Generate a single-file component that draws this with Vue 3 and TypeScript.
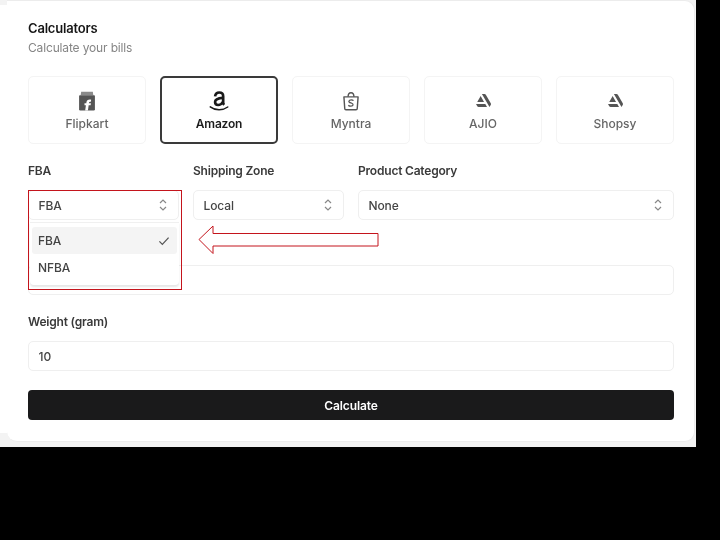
<template>
  <div class="screen">
    <div class="edge"></div>
    <div class="card">
      <h1 class="title">Calculators</h1>
      <p class="subtitle">Calculate your bills</p>

      <div class="tabs">
        <button v-for="tab in tabs" :key="tab.name" class="tab" :class="{ active: tab.name === selected }">
          <svg v-if="tab.icon === 'flipkart'" class="tab-icon" viewBox="0 0 24 24">
            <path d="M5 1h14l.6 4H4.400z" fill="#8a8a8a" />
            <path d="M3.500 5h17a1 1 0 0 1 1 1v16a1.500 1.500 0 0 1-1.500 1.500H4A1.500 1.500 0 0 1 2.500 22V6a1 1 0 0 1 1-1z" fill="#555" />
            <path d="M17 10.500c-3.300-.6-5.300.4-5.700 3.200l-.2 1H9v2.500h1.700l-.9 6.300h3.300l.9-6.300h2.300l.4-2.500h-2.400l.1-.7c.1-1 .9-1.300 2.200-1z" fill="#fff" />
          </svg>
          <svg v-else-if="tab.icon === 'amazon'" class="tab-icon" viewBox="0 0 24 24">
            <path d="M7.300 6.500C7.800 3 10 1.800 12.200 1.800c2.800 0 4.800 1.300 4.800 4.400v8c0 1 .5 1.700 1.200 2.400" fill="none" stroke="#1a1a1a" stroke-width="3.200" />
            <path d="M16.800 8.200c-4.800.3-9.500 1-9.500 5.100 0 2.300 1.500 3.500 3.600 3.500 2.500 0 4.500-1.500 5.900-3.800" fill="none" stroke="#1a1a1a" stroke-width="3.200" />
            <path d="M1.500 19c6 4.600 15 4.600 21 .2" fill="none" stroke="#1a1a1a" stroke-width="1.800" stroke-linecap="round" />
          </svg>
          <svg v-else-if="tab.icon === 'myntra'" class="tab-icon" viewBox="0 0 24 24">
            <path d="M3.500 7h17l-1 14a1.500 1.500 0 0 1-1.500 1.500H6A1.500 1.500 0 0 1 4.500 21z" fill="none" stroke="#555" stroke-width="1.700" stroke-linejoin="round" />
            <path d="M8.500 7c0-3 1.500-5 3.500-5s3.500 2 3.500 5" fill="none" stroke="#555" stroke-width="1.700" />
            <path d="M15 11.500c-.8-1-4.800-1.500-5.500.6-.8 2.700 5.500 1.800 5 4.600-.4 2-4.500 1.900-5.700.4" fill="none" stroke="#555" stroke-width="1.500" />
          </svg>
          <span v-else class="tab-icon">
            <svg class="triangle" viewBox="0 0 24 24">
              <path fill="#555" d="M0 17.723l2.027 3.505h.001a2.424 2.424 0 0 0 2.164 1.333h13.457l-2.792-4.838H0zm24 .025c0-.484-.143-.935-.388-1.314L15.728 2.728a2.424 2.424 0 0 0-2.142-1.289H9.419L21.598 22.54l1.920-3.325c.378-.637.482-.919.482-1.467zm-11.129-3.462L7.428 4.858l-5.444 9.428h10.887z" />
            </svg>
          </span>
          <span>{{ tab.name }}</span>
        </button>
      </div>

      <div class="selects">
        <div v-for="field in selects" :key="field.label" class="field">
          <label class="label">{{ field.label }}</label>
          <div class="control select">
            <span>{{ field.value }}</span>
            <svg class="chevrons" viewBox="0 0 12 14">
              <path d="M3 5l3-3 3 3M3 9l3 3 3-3" />
            </svg>
          </div>
          <div v-if="field.label === 'FBA'" class="dropdown">
            <div v-for="opt in fbaOptions" :key="opt" class="option" :class="{ current: opt === field.value }">
              <span>{{ opt }}</span>
              <svg v-if="opt === field.value" class="check" viewBox="0 0 14 12">
                <path d="M1.500 6.500l3.500 3.500 7.500-8" />
              </svg>
            </div>
          </div>
          <div v-if="field.label === 'FBA'" class="highlight-box"></div>
        </div>
      </div>

      <div class="field blank-field">
        <div class="control"></div>
      </div>

      <div class="field weight-field">
        <label class="label">Weight (gram)</label>
        <div class="control">{{ weight }}</div>
      </div>

      <button class="calculate">Calculate</button>
    </div>

    <svg class="arrow" width="182" height="32" viewBox="0 0 182 32">
      <path d="M1 14.500L15 1v7.500h165v12.500H15v7.500z" />
    </svg>
  </div>
</template>

<script setup lang="ts">
import { ref } from 'vue';

const tabs = [
  { name: 'Flipkart', icon: 'flipkart' },
  { name: 'Amazon', icon: 'amazon' },
  { name: 'Myntra', icon: 'myntra' },
  { name: 'AJIO', icon: 'triangle' },
  { name: 'Shopsy', icon: 'triangle' },
];

const selected = ref('Amazon');
const weight = ref('10');
const fbaOptions = ['FBA', 'NFBA'];

const selects = [
  { label: 'FBA', value: 'FBA' },
  { label: 'Shipping Zone', value: 'Local' },
  { label: 'Product Category', value: 'None' },
];
</script>

<style scoped>
.screen {
  position: relative;
  display: flex;
  width: 696px;
  height: 447px;
  background: #f3f3f3;
  font-family: Inter, "Liberation Sans", sans-serif;
  filter: blur(0.45px);
}

.edge {
  width: 7px;
  margin: 5px 0 14px;
  background: #fff;
}

.card {
  width: 688px;
  height: 442px;
  box-sizing: border-box;
  padding: 19px 20px 0 21px;
  margin-right: 1px;
  background: #fff;
  border: 1px solid #ececec;
  border-left: none;
  border-radius: 0 10px 10px 10px;
}

.title {
  margin: 0;
  font-size: 13px;
  line-height: 16px;
  font-weight: 600;
  letter-spacing: -0.2px;
  color: #161616;
}

.subtitle {
  margin: 4px 0 0;
  font-size: 12px;
  line-height: 16px;
  letter-spacing: -0.15px;
  color: #858585;
}

.tabs {
  display: grid;
  grid-template-columns: repeat(5, 118px);
  gap: 14px;
  margin-top: 20px;
}

.tab {
  display: flex;
  flex-direction: column;
  align-items: center;
  justify-content: center;
  gap: 6px;
  height: 68px;
  padding: 1px 0 0;
  background: #fff;
  border: 1px solid #f4f4f4;
  border-radius: 5px;
  font-family: inherit;
  font-size: 12px;
  line-height: 14px;
  font-weight: 500;
  color: #666;
}

.tab.active {
  border: 2px solid #3a3a3a;
  color: #1c1c1c;
  font-weight: 600;
  letter-spacing: -0.2px;
}

.tab-icon {
  display: flex;
  align-items: center;
  justify-content: center;
  width: 20px;
  height: 20px;
}

.triangle {
  width: 15px;
  height: 15px;
}

.selects {
  position: relative;
  display: grid;
  grid-template-columns: 151px 151px 316px;
  gap: 14px;
  margin-top: 20px;
}

.field {
  position: relative;
}

.label {
  display: block;
  margin-bottom: 12px;
  font-size: 12px;
  line-height: 14px;
  font-weight: 600;
  letter-spacing: -0.2px;
  color: #3a3a3a;
}

.control {
  display: flex;
  align-items: center;
  box-sizing: border-box;
  height: 30px;
  padding: 0 9.500px;
  background: #fff;
  border: 1px solid #efefef;
  border-radius: 5px;
  font-size: 12px;
  font-weight: 500;
  letter-spacing: -0.1px;
  color: #444;
}

.select {
  justify-content: space-between;
}

.chevrons {
  width: 12px;
  height: 14px;
  margin-right: 0;
  fill: none;
  stroke: #888;
  stroke-width: 1.200;
}

.dropdown {
  position: absolute;
  z-index: 2;
  top: 58px;
  left: 2px;
  width: 149px;
  height: 63px;
  box-sizing: border-box;
  padding: 4px 2px;
  background: #fff;
  border-top: 1px solid #f0f0f0;
  border-radius: 0 0 4px 4px;
  box-shadow: 0 2px 2px rgba(0, 0, 0, 0.1);
  font-size: 12px;
  font-weight: 500;
  letter-spacing: -0.1px;
  color: #444;
}

.option {
  display: flex;
  align-items: center;
  justify-content: space-between;
  height: 27px;
  padding: 0 7px 0 6px;
  border-radius: 3px;
}

.option.current {
  background: #f4f4f4;
}

.check {
  width: 12px;
  height: 10px;
  fill: none;
  stroke: #555;
  stroke-width: 1.500;
}

.highlight-box {
  position: absolute;
  z-index: 3;
  top: 26px;
  left: 0;
  width: 154px;
  height: 100px;
  box-sizing: border-box;
  border: 1px solid #c4141c;
  pointer-events: none;
}

.blank-field {
  margin-top: 45px;
}

.weight-field {
  margin-top: 20px;
}

.calculate {
  display: block;
  width: 100%;
  height: 30px;
  margin-top: 19px;
  padding: 0;
  background: #1a1a1b;
  border: none;
  border-radius: 4px;
  font-family: inherit;
  font-size: 12px;
  font-weight: 600;
  letter-spacing: -0.1px;
  color: #fff;
}

.arrow {
  position: absolute;
  z-index: 4;
  top: 225px;
  left: 198px;
  fill: #fff;
  stroke: #c4141c;
  stroke-width: 1;
}
</style>

<style>
html,
body {
  background: #000;
}
</style>
